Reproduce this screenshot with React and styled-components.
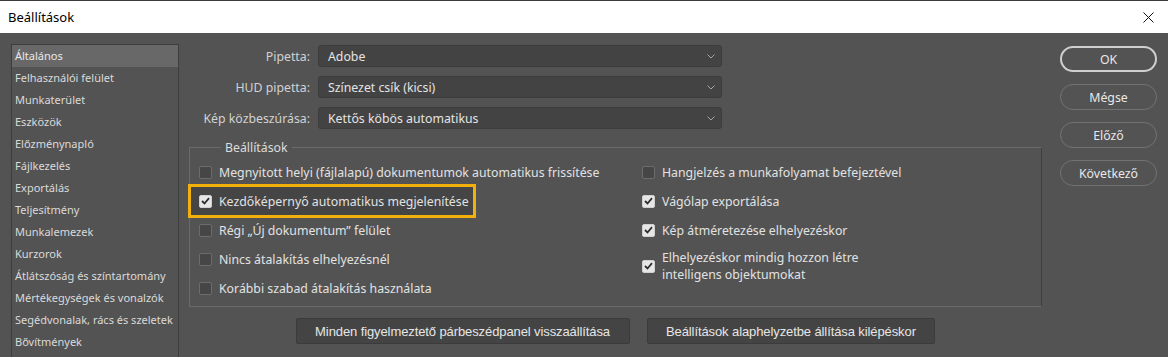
import React from 'react';
import styled, { createGlobalStyle } from 'styled-components';

const GlobalStyle = createGlobalStyle`
  html, body {
    margin: 0;
    padding: 0;
    background: #535353;
    overflow: hidden;
  }
  body {
    font-family: "Noto Sans", "Open Sans", sans-serif;
  }
`;

const Window = styled.div`
  width: 1168px;
  height: 357px;
  display: flex;
  flex-direction: column;
  overflow: hidden;
  background: #535353;
`;

const TitleBar = styled.div`
  height: 32px;
  flex: none;
  display: flex;
  align-items: center;
  justify-content: space-between;
  padding: 0 13px 0 8px;
  background: #ffffff;
  border-top: 1px solid #3a3a3a;
  color: #000;
  font-size: 13px;
`;

const CloseButton = styled.button`
  border: 0;
  background: transparent;
  padding: 0;
  width: 14px;
  height: 14px;
  display: flex;
  align-items: center;
  justify-content: center;
`;

const Body = styled.div`
  flex: 1;
  display: flex;
  padding: 11px 11px 0 11px;
  gap: 10px;
  min-height: 0;
`;

const Sidebar = styled.ul`
  list-style: none;
  margin: 0;
  padding: 0;
  width: 168px;
  height: 340px;
  flex: none;
  box-sizing: border-box;
  border: 1px solid #3d3d3d;
  border-bottom: 0;
`;

const SidebarItem = styled.li`
  height: 22px;
  line-height: 21px;
  padding-left: 3px;
  font-size: 11px;
  color: ${p => (p.$active ? '#e8e8e8' : '#dadada')};
  background: ${p => (p.$active ? '#686868' : 'transparent')};
  white-space: nowrap;
`;

const Main = styled.div`
  width: 853px;
  flex: none;
  display: flex;
  flex-direction: column;
`;

const FormGrid = styled.div`
  display: grid;
  grid-template-columns: 121px 404px;
  column-gap: 8px;
  row-gap: 9px;
  padding-top: 1px;
  align-items: center;
`;

const Label = styled.label`
  text-align: right;
  font-size: 12.3px;
  color: #d2d2d2;
  white-space: nowrap;
`;

const Select = styled.div`
  height: 22px;
  box-sizing: border-box;
  display: flex;
  align-items: center;
  justify-content: space-between;
  padding: 0 6px 0 9px;
  background: #434343;
  border: 1px solid #3c3c3c;
  border-radius: 3px;
  font-size: 12.3px;
  color: #e4e4e4;
`;

const Group = styled.fieldset`
  margin: 10px 0 0 0;
  padding: 6px 0 8px 9px;
  border: 1px solid #6a6a6a;
  border-right-color: #3f3f3f;
  border-radius: 0;
  display: flex;
  min-width: 0;
`;

const Legend = styled.legend`
  margin-left: 22px;
  padding: 0 4px;
  font-size: 12.3px;
  color: #dcdcdc;
`;

const OptionColumn = styled.div`
  display: flex;
  flex-direction: column;
  gap: 9px;
  width: ${p => p.$width}px;
  flex: none;
`;

const Option = styled.div`
  display: flex;
  align-items: center;
  gap: 7px;
  min-height: 20px;
  font-size: 12.3px;
  line-height: 17px;
  color: #e2e2e2;
  white-space: nowrap;
  ${p =>
    p.$highlight &&
    `
    width: fit-content;
    margin: -4px 0 -4px -8px;
    padding: 4px 4px 4px 8px;
    background: #454545;
    box-shadow: 0 0 0 3px #f2b10a;
  `}
`;

const Box = styled.span`
  width: 13px;
  height: 13px;
  box-sizing: border-box;
  flex: none;
  border-radius: 2px;
  display: flex;
  align-items: center;
  justify-content: center;
  background: ${p => (p.$checked ? '#e6e6e6' : '#464646')};
  border: 1px solid ${p => (p.$checked ? '#d0d0d0' : '#6c6c6c')};
`;

const BottomBar = styled.div`
  display: flex;
  justify-content: center;
  gap: 17px;
  margin-top: 11px;
`;

const FlatButton = styled.button`
  height: 26px;
  padding: 0 18.5px;
  background: #444444;
  border: 1px solid #3b3b3b;
  border-radius: 2px;
  color: #e6e6e6;
  font-family: "Liberation Sans", Arial, sans-serif;
  font-size: 13px;
  letter-spacing: -0.1px;
`;

const ButtonColumn = styled.div`
  width: 97px;
  flex: none;
  margin-left: 8px;
  display: flex;
  flex-direction: column;
  gap: 12px;
  padding-top: 2px;
`;

const PillButton = styled.button`
  height: 26px;
  box-sizing: border-box;
  border-radius: 13px;
  background: transparent;
  border: ${p => (p.$primary ? '2px solid #cfcfcf' : '1px solid #727272')};
  color: #e8e8e8;
  font-family: "Noto Sans", sans-serif;
  font-size: 12.3px;
  padding: 0;
`;

const Chevron = () => (
  <svg width="8" height="5" viewBox="0 0 8 5">
    <polyline points="0.5,0.5 4,4 7.5,0.5" fill="none" stroke="#a5a5a5" strokeWidth="1" />
  </svg>
);

const Check = () => (
  <svg width="9" height="8" viewBox="0 0 9 8">
    <polyline points="1,4 3.5,6.5 8,1.2" fill="none" stroke="#2e2e2e" strokeWidth="1.8" />
  </svg>
);

const CheckOption = ({ checked, highlight, children }) => (
  <Option $highlight={highlight}>
    <Box $checked={checked}>{checked && <Check />}</Box>
    <span>{children}</span>
  </Option>
);

const categories = [
  'Általános',
  'Felhasználói felület',
  'Munkaterület',
  'Eszközök',
  'Előzménynapló',
  'Fájlkezelés',
  'Exportálás',
  'Teljesítmény',
  'Munkalemezek',
  'Kurzorok',
  'Átlátszóság és színtartomány',
  'Mértékegységek és vonalzók',
  'Segédvonalak, rács és szeletek',
  'Bővítmények',
];

const selects = [
  ['Pipetta:', 'Adobe'],
  ['HUD pipetta:', 'Színezet csík (kicsi)'],
  ['Kép közbeszúrása:', 'Kettős köbös automatikus'],
];

export default function App() {
  return (
    <Window>
      <GlobalStyle />
      <TitleBar>
        <span>Beállítások</span>
        <CloseButton aria-label="Bezárás">
          <svg width="11" height="11" viewBox="0 0 11 11">
            <path d="M0.5 0.5 L10.5 10.5 M10.5 0.5 L0.5 10.5" stroke="#111" strokeWidth="1" />
          </svg>
        </CloseButton>
      </TitleBar>
      <Body>
        <Sidebar>
          {categories.map((c, i) => (
            <SidebarItem key={c} $active={i === 0}>{c}</SidebarItem>
          ))}
        </Sidebar>
        <Main>
          <FormGrid>
            {selects.map(([label, value]) => (
              <React.Fragment key={label}>
                <Label>{label}</Label>
                <Select>
                  <span>{value}</span>
                  <Chevron />
                </Select>
              </React.Fragment>
            ))}
          </FormGrid>
          <Group>
            <Legend>Beállítások</Legend>
            <OptionColumn $width={443}>
              <CheckOption>Megnyitott helyi (fájlalapú) dokumentumok automatikus frissítése</CheckOption>
              <CheckOption checked highlight>Kezdőképernyő automatikus megjelenítése</CheckOption>
              <CheckOption>Régi „Új dokumentum” felület</CheckOption>
              <CheckOption>Nincs átalakítás elhelyezésnél</CheckOption>
              <CheckOption>Korábbi szabad átalakítás használata</CheckOption>
            </OptionColumn>
            <OptionColumn $width={390}>
              <CheckOption>Hangjelzés a munkafolyamat befejeztével</CheckOption>
              <CheckOption checked>Vágólap exportálása</CheckOption>
              <CheckOption checked>Kép átméretezése elhelyezéskor</CheckOption>
              <CheckOption checked>
                Elhelyezéskor mindig hozzon létre
                <br />
                intelligens objektumokat
              </CheckOption>
            </OptionColumn>
          </Group>
          <BottomBar>
            <FlatButton>Minden figyelmeztető párbeszédpanel visszaállítása</FlatButton>
            <FlatButton>Beállítások alaphelyzetbe állítása kilépéskor</FlatButton>
          </BottomBar>
        </Main>
        <ButtonColumn>
          <PillButton $primary>OK</PillButton>
          <PillButton>Mégse</PillButton>
          <PillButton>Előző</PillButton>
          <PillButton>Következő</PillButton>
        </ButtonColumn>
      </Body>
    </Window>
  );
}
